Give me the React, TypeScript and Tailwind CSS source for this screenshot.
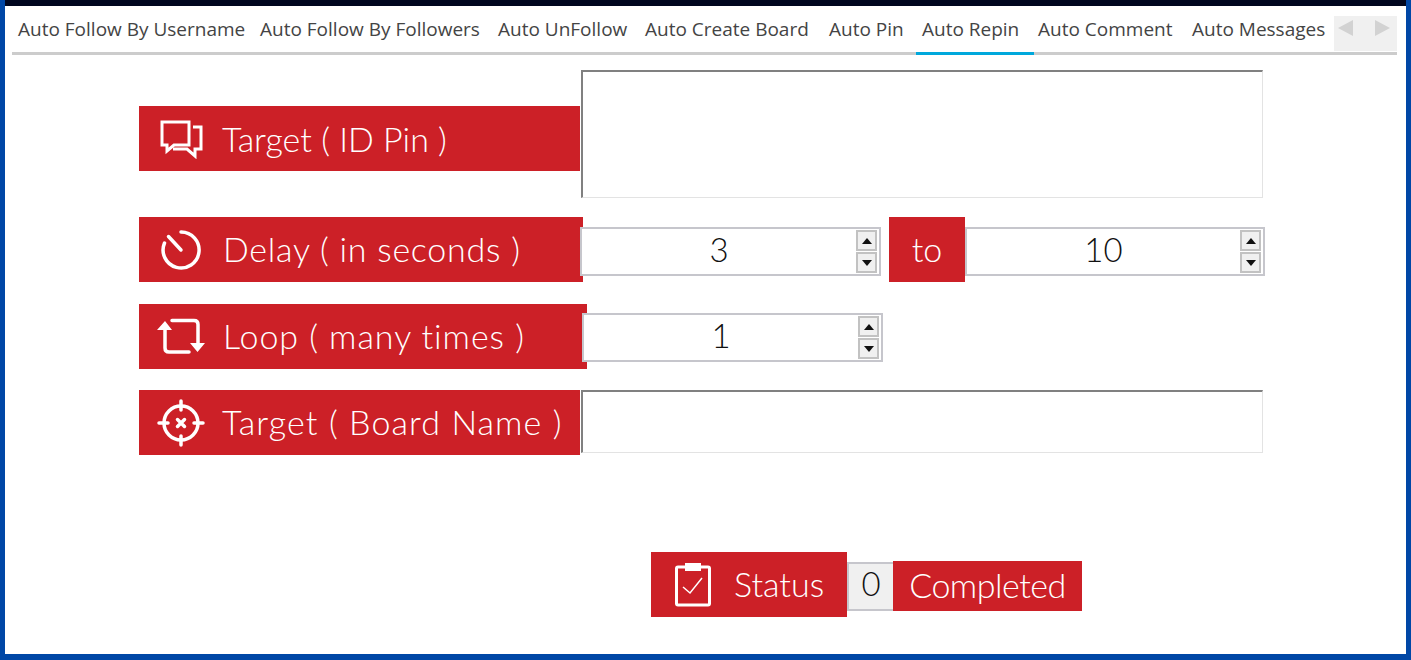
const tabs = [
  { name: "Auto Follow By Username", cls: "w-[242px] pl-[6px]" },
  { name: "Auto Follow By Followers", cls: "w-[238px] pl-[6px]" },
  { name: "Auto UnFollow", cls: "w-[147px] pl-[6px]" },
  { name: "Auto Create Board", cls: "w-[184px] pl-[6px]" },
  { name: "Auto Pin", cls: "w-[93px] pl-[6px]" },
  { name: "Auto Repin", cls: "w-[118px] pl-[6px] border-b-[#00a8dc]" },
  { name: "Auto Comment", cls: "w-[152px] pl-[4px]" },
  { name: "Auto Messages", cls: "w-[148px] pl-[6px]" },
];

const labelFont = "font-['Lato','Liberation_Sans',sans-serif] font-light text-[34px] text-white whitespace-nowrap";

// little stepper next to the number boxes
const Stepper = () => (
  <div className="flex flex-col gap-px">
    <div className="w-[21px] h-[21px] bg-[#f0f0f0] border-2 border-[#c2c2c2] flex items-center justify-center">
      <svg width="10" height="6" viewBox="0 0 10 6">
        <path d="M5 0 10 6H0z" fill="#111" />
      </svg>
    </div>
    <div className="w-[21px] h-[21px] bg-[#f0f0f0] border-2 border-[#c2c2c2] flex items-center justify-center">
      <svg width="10" height="6" viewBox="0 0 10 6">
        <path d="M0 0h10L5 6z" fill="#111" />
      </svg>
    </div>
  </div>
);

const NumberBox = ({ value, cls }: { value: string; cls: string }) => (
  <div className={`h-[49px] border-2 border-[#c6c6cc] bg-white flex items-center pr-[2px] ${cls}`}>
    <div className="flex-1 text-center font-['Lato','Liberation_Sans',sans-serif] font-light text-[33px] leading-none text-[#111] -mt-[4px]">
      {value}
    </div>
    <Stepper />
  </div>
);

const ChatIcon = () => (
  <svg width="44" height="40" viewBox="0 0 44 40" fill="none" stroke="#fff" strokeWidth="3">
    <path d="M2 3h27v23H14l-7 6v-6H2z" />
    <path d="M33 8h8v22h-6v7l-8-7H13" />
  </svg>
);

const TimerIcon = () => (
  <svg width="44" height="44" viewBox="0 0 44 44" fill="none" stroke="#fff" strokeWidth="3.500" strokeLinecap="round">
    <path d="M22 4a18 18 0 1 1-16.500 11" />
    <path d="M9.500 8.500 22 22" />
  </svg>
);

const LoopIcon = () => (
  <svg width="48" height="40" viewBox="0 0 48 40" fill="none" stroke="#fff" strokeWidth="3.500" strokeLinecap="round">
    <path d="M8 13v18q0 4 4 4h20" />
    <path d="M15 3.500h22q4 0 4 4V26" />
    <path d="M8 4 0 13h15z M33 26h15l-7.500 9z" fill="#fff" stroke="none" />
  </svg>
);

const TargetIcon = () => (
  <svg width="48" height="48" viewBox="0 0 48 48" fill="none" stroke="#fff" strokeWidth="3.500" strokeLinecap="round">
    <circle cx="24" cy="24" r="17" />
    <path d="M24 2v9M24 37v9M2 24h9M37 24h9" />
    <path d="M20.500 20.500l7 7M27.500 20.500l-7 7" />
  </svg>
);

const ClipboardIcon = () => (
  <svg width="38" height="46" viewBox="0 0 38 46" fill="none" stroke="#fff">
    <rect x="2.500" y="5" width="33" height="38" rx="1.500" strokeWidth="3" />
    <rect x="11" y="1" width="16" height="8" fill="#fff" stroke="none" />
    <path d="M9 25l7 6 12-15" strokeWidth="1.500" />
  </svg>
);

const App = () => {
  return (
    <div className="h-[660px] bg-[#0047a6] px-[5px] pb-[6px]">
      <div className="h-full bg-white flex flex-col">
        <div className="h-[6px] bg-[#00061f]" />

        {/* tabs */}
        <div className="ml-[7px] w-[1385px] flex items-stretch h-[49px] font-['Open_Sans','Liberation_Sans',sans-serif] text-[19px] text-[#444] border-b-[3px] border-[#cccccc]">
          {tabs.map((t) => (
            <div
              key={t.name}
              className={`h-[49px] pt-[9px] whitespace-nowrap border-b-[3px] border-transparent shrink-0 ${t.cls}`}
            >
              {t.name}
            </div>
          ))}
          <div className="w-[63px] h-[35px] mt-[10px] bg-[#f0f0f0] flex items-start justify-center gap-[22px] pt-[4px] pr-[3px]">
            <svg width="15" height="16" viewBox="0 0 15 16">
              <path d="M15 0v16L0 8z" fill="#d2d2d2" />
            </svg>
            <svg width="15" height="16" viewBox="0 0 15 16">
              <path d="M0 0v16l15-8z" fill="#d2d2d2" />
            </svg>
          </div>
        </div>

        {/* form */}
        <div className="pl-[134px] pt-[15px]">
          <div className="flex items-start">
            <div className="mt-[36px] w-[441px] h-[65px] bg-[#cc2027] flex items-center pl-[21px]">
              <ChatIcon />
              <span className={`ml-[18px] -mt-[1px] ${labelFont}`}>Target ( ID Pin )</span>
            </div>
            <div className="ml-px w-[682px] h-[128px] bg-white border-t-2 border-l-2 border-t-[#808080] border-l-[#808080] border-r border-b border-r-[#e3e3e3] border-b-[#e3e3e3]" />
          </div>

          <div className="flex items-start mt-[19px]">
            <div className="w-[444px] h-[65px] bg-[#cc2027] flex items-center pl-[20px]">
              <TimerIcon />
              <span className={`ml-[20px] -mt-[2px] tracking-[0.75px] ${labelFont}`}>Delay ( in seconds )</span>
            </div>
            <NumberBox value="3" cls="mt-[10px] w-[301px] -ml-[3px]" />
            <div className="ml-[8px] w-[76px] h-[65px] bg-[#cc2027] flex items-center justify-center">
              <span className={`-mt-[2px] ${labelFont}`}>to</span>
            </div>
            <NumberBox value="10" cls="mt-[10px] w-[300px]" />
          </div>

          <div className="flex items-start mt-[22px]">
            <div className="w-[448px] h-[65px] bg-[#cc2027] flex items-center pl-[18px]">
              <LoopIcon />
              <span className={`ml-[18px] -mt-[2px] tracking-[0.95px] ${labelFont}`}>Loop ( many times )</span>
            </div>
            <NumberBox value="1" cls="mt-[9px] w-[301px] -ml-[5px]" />
          </div>

          <div className="flex items-start mt-[21px]">
            <div className="w-[441px] h-[65px] bg-[#cc2027] flex items-center pl-[18px]">
              <TargetIcon />
              <span className={`ml-[17px] -mt-[2px] tracking-[1.100px] ${labelFont}`}>Target ( Board Name )</span>
            </div>
            <div className="ml-px w-[682px] h-[63px] bg-white border-t-2 border-l-2 border-t-[#808080] border-l-[#808080] border-r border-b border-r-[#e3e3e3] border-b-[#e3e3e3]" />
          </div>
        </div>

        {/* status */}
        <div className="pl-[646px] mt-[97px] flex items-start">
          <div className="w-[196px] h-[65px] bg-[#cc2027] flex items-center pl-[23px]">
            <ClipboardIcon />
            <span className={`ml-[22px] -mt-[2px] ${labelFont}`}>Status</span>
          </div>
          <div className="mt-[10px] w-[46px] h-[49px] bg-[#f0f0f0] border-2 border-r-0 border-[#c6c6cc] flex items-center justify-center font-['Lato','Liberation_Sans',sans-serif] font-light text-[33px] text-[#111]">
            <span className="-mt-[5px]">0</span>
          </div>
          <div className="mt-[9px] w-[189px] h-[50px] bg-[#cc2027] flex items-center justify-center">
            <span className={`-mt-[3px] tracking-[-0.5px] ${labelFont}`}>Completed</span>
          </div>
        </div>
      </div>
    </div>
  );
};

export default App;
